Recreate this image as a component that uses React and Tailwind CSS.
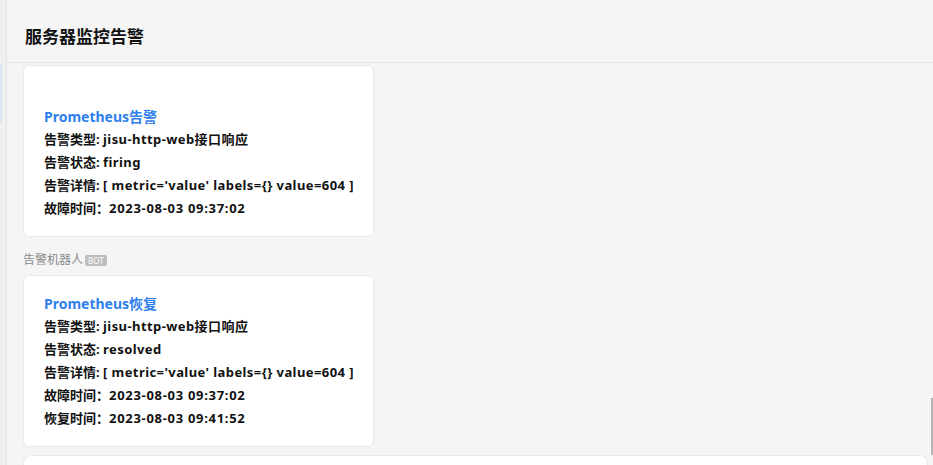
const font = { fontFamily: '"Noto Sans", "Noto Sans CJK SC", sans-serif' };

const Card = ({ title, lines, topGap }) => (
  <div className="w-[351px] rounded-[6px] border border-[#e9e9e9] bg-white px-[20px] py-[16px]">
    {topGap && <div className="h-[23px]" />}
    <div className="text-[14px] font-bold leading-[23px] text-[#2f80ed]">{title}</div>
    {lines.map(([label, value, time], i) => (
      <div key={i} className="whitespace-pre text-[13px] font-bold leading-[23px] text-[#111]">
        {label}
        <span className={time ? "tracking-[0.7px]" : "tracking-[0.42px]"}>{value}</span>
      </div>
    ))}
  </div>
);

export default function App() {
  return (
    <div style={font} className="flex h-[465px] w-[933px] overflow-hidden bg-[#f5f5f5]">
      <div className="relative w-[7px] shrink-0 border-r border-[#e3e3e3] bg-[#efefef]">
        <div className="absolute left-0 top-[64px] h-[59px] w-[2px] bg-[#d9e4f4]" />
      </div>
      <div className="relative flex min-w-0 flex-1 flex-col">
        <div className="flex h-[63px] shrink-0 items-center border-b border-[#e6e6e6] pl-[18px] pt-[11px]">
          <h1 className="text-[17px] font-bold text-[#111]">服务器监控告警</h1>
        </div>
        <div className="flex flex-col pl-[16px] pt-[2px]">
          <Card
            topGap
            title="Prometheus告警"
            lines={[
              ["告警类型: ", "jisu-http-web接口响应"],
              ["告警状态: ", "firing"],
              ["告警详情: ", "[ metric='value' labels={} value=604 ]"],
              ["故障时间：", "2023-08-03 09:37:02", true],
            ]}
          />
          <div className="mt-[15px] mb-[7px] flex items-center gap-[2px] text-[12px] leading-[16px] text-[#8a8a8a]">
            <span>告警机器人</span>
            <span className="rounded-[2px] bg-[#bdbdbd] px-[3px] text-[8px] leading-[11px] text-white">BOT</span>
          </div>
          <Card
            title="Prometheus恢复"
            lines={[
              ["告警类型: ", "jisu-http-web接口响应"],
              ["告警状态: ", "resolved"],
              ["告警详情: ", "[ metric='value' labels={} value=604 ]"],
              ["故障时间：", "2023-08-03 09:37:02", true],
              ["恢复时间：", "2023-08-03 09:41:52", true],
            ]}
          />
          <div className="mt-[8px] mr-[5px] h-[40px] rounded-t-[8px] border border-[#e9e9e9] bg-white" />
        </div>
        <div className="absolute right-0 top-[398px] h-[57px] w-[2px] bg-[#b5b5b5]" />
      </div>
    </div>
  );
}
